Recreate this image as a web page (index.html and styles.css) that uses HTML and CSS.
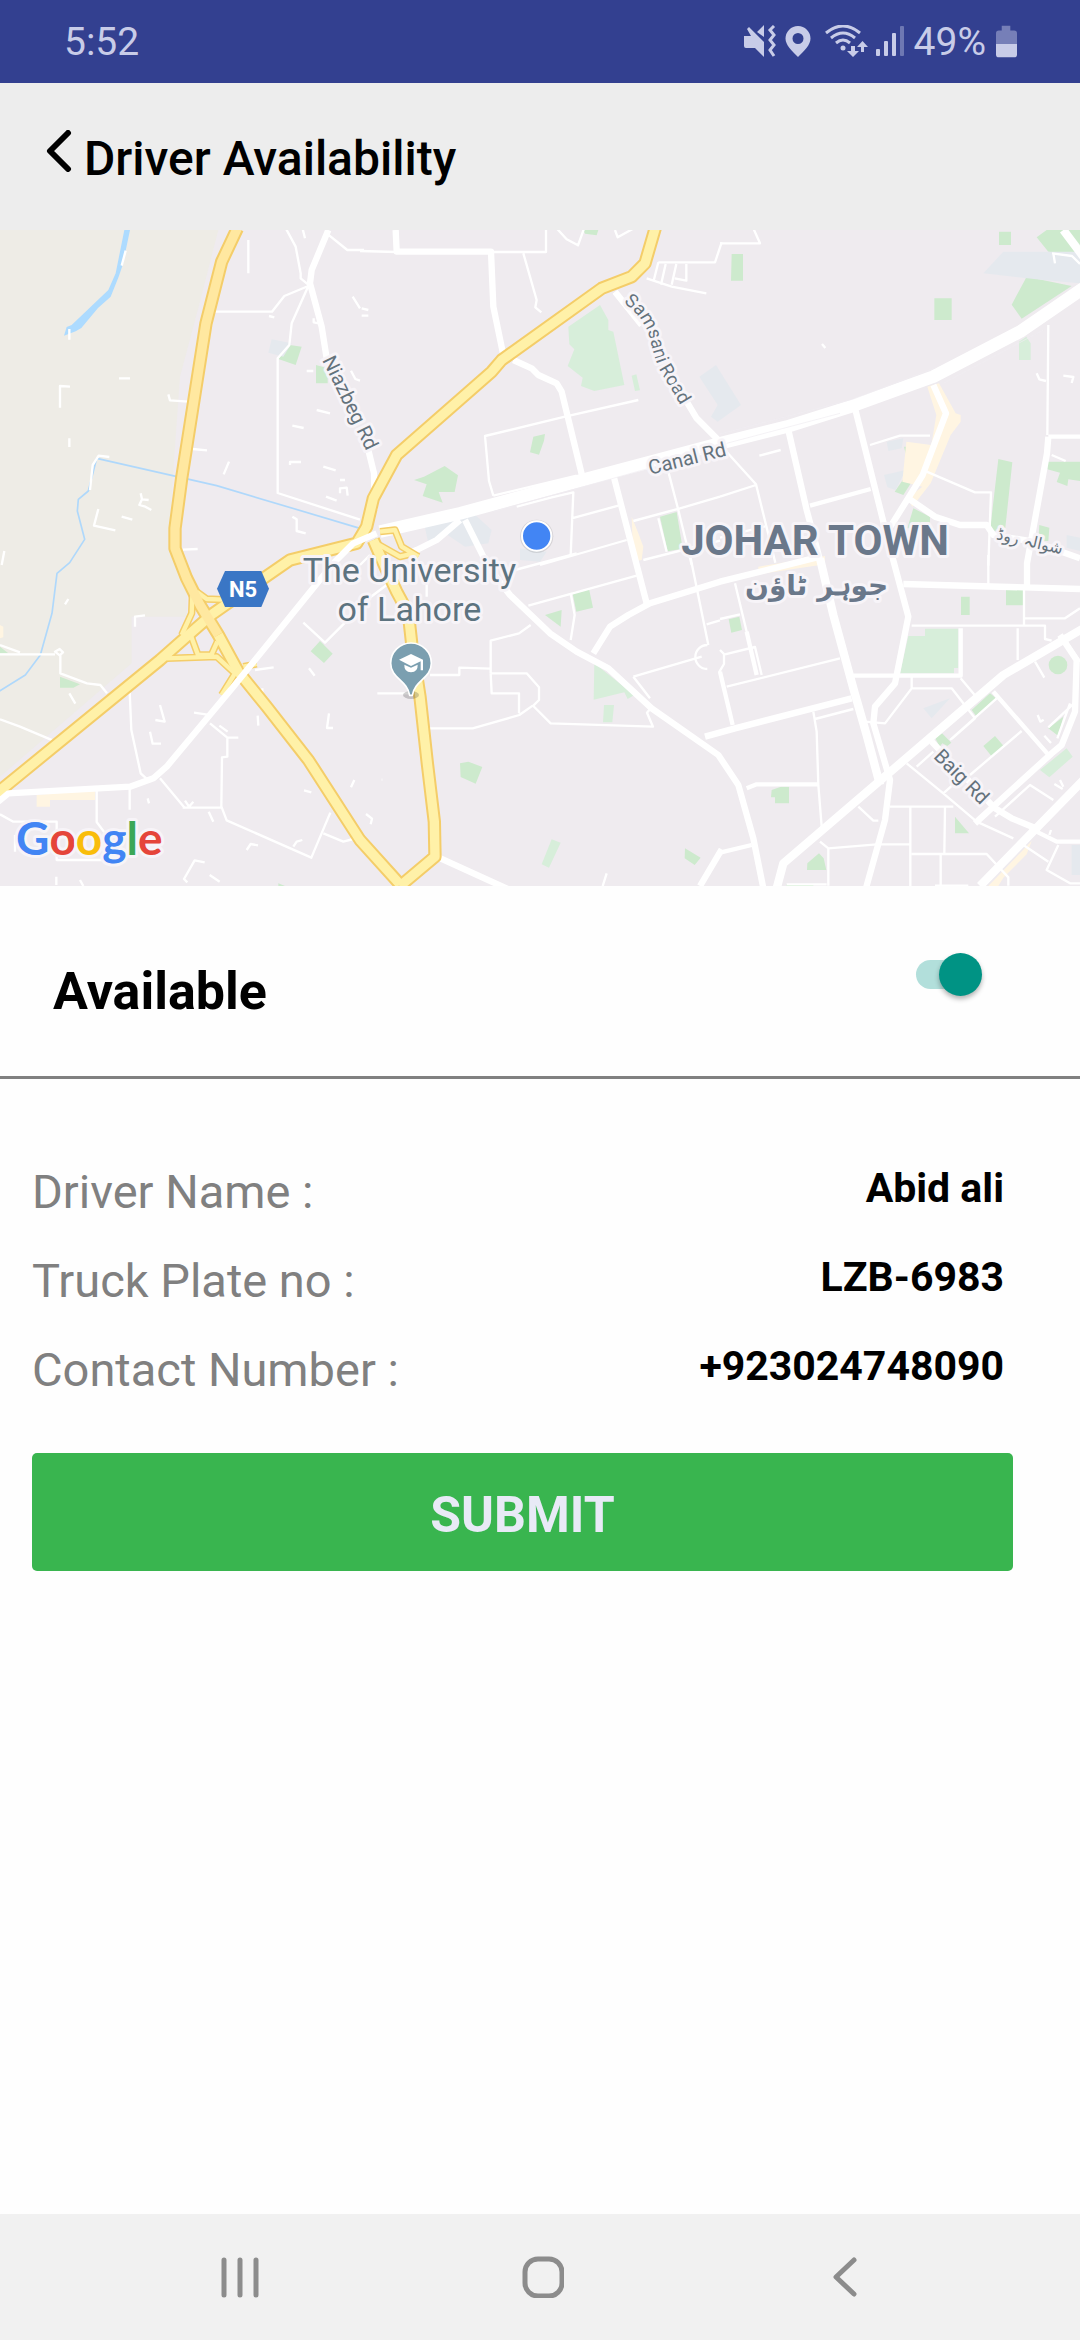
FILE: index.html
```html
<!DOCTYPE html>
<html lang="en">
<head>
<meta charset="utf-8">
<meta name="viewport" content="width=device-width, initial-scale=1">
<title>Driver Availability</title>
<link rel="stylesheet" href="styles.css">
</head>
<body>
<div class="status-bar">
  <span class="status-time">5:52</span>
  <div class="status-icons">
    <svg class="status-glyphs" viewBox="0 0 160 34" aria-hidden="true">
      <g fill="currentColor">
        <path d="M0 11h7L3 4l2-2 15 15v15l-9-9H2q-2 0-2-2zM13 7l7-7v12z"/>
        <path fill-rule="evenodd" d="M54 1a12.500 12.500 0 0 1 12.500 12.500C66.500 20 60 26 54 32 48 26 41.500 20 41.500 13.500A12.500 12.500 0 0 1 54 1zm0 7a5.500 5.500 0 1 0 0 11 5.500 5.500 0 0 0 0-11z"/>
        <circle cx="99" cy="23" r="2.500"/>
        <path d="M107 21h4v5h4l-6 6-6-6h4zM117 27h3v-5h4l-5.500-6-5.500 6h4z"/>
        <rect x="132" y="24" width="4" height="7" rx="1"/>
        <rect x="140" y="16" width="4" height="15" rx="1"/>
        <rect x="148" y="8" width="4" height="23" rx="1"/>
        <rect x="156" y="1" width="4" height="30" rx="1" opacity=".4"/>
      </g>
      <g fill="none" stroke="currentColor" stroke-width="3">
        <path d="M30 1l-4 4 4 5-4 5 4 5-4 5 4 6"/>
        <path d="M82 8q17-14 34 0M87 13q12-10 24 0M92 18q7-6 14 0"/>
      </g>
    </svg>
    <span>49%</span>
    <svg class="status-battery" viewBox="0 0 22 33" aria-hidden="true">
      <path fill="currentColor" opacity=".45" d="M6 0h9v5h4q3 0 3 3v11H0V8q0-3 3-3h3z"/>
      <path fill="currentColor" d="M0 19h22v11q0 3-3 3H3q-3 0-3-3z"/>
    </svg>
  </div>
</div>

<header class="app-header">
  <button class="back-button" type="button" aria-label="Back">
    <svg viewBox="0 0 26 42" aria-hidden="true"><path d="M22 3L4 21l18 18"/></svg>
  </button>
  <h1 class="title">Driver Availability</h1>
</header>

<main>
  <svg class="map" viewBox="0 0 3240 1968" role="img" aria-label="Map of Johar Town, Lahore">
    <rect class="land" width="3240" height="1968"/>
    <path class="rural" d="M0 0H655L600 215 540 440 520 720 505 950 560 1080V1160H395V1300L0 1640z"/>

    <g class="green">
      <path d="M870 345l35 5-18 55-52-18zM948 405l35 10v45h-35z"/>
      <path d="M0 1250l25 20H0zM180 1340l60 23-20 10h-40zM960 1233l38 38-26 28-40-35zM835 1968v-8l20 8z"/>
      <path d="M1750 0h45l-5 16-35-5zM1600 620l35-8-3 20-15 42-27-7zM1242 750l30-10 62-32 40 28-10 50h-48l12 32-60-20 12-35z"/>
      <path d="M1980 860l50-14 18 110-45 8z"/>
      <path d="M2195 72h34v80h-36zM2997 5h36v40h-36zM2803 205h52v65h-52zM3110 22l30-22h100v75l-95-10zM3080 140l135 28-150 98-30-42zM2712 650h36v28l-22 32zM2725 725l20 15-35 55-26-10zM2740 835l50 25v35h-68zM2995 687l42 10-22 205h-45zM3142 695h98v58l-35-5-3 20-32-12 10-28-38-10zM3118 885l30 8-3 40h-30z"/>
      <path d="M1717 1087l50-11 12 57-50 12zM1635 1155l50-15-3 50zM1380 1600l25-5 42 16-20 50-45-20zM2055 1855l47 28-18 22-30-20z"/>
      <path d="M2186 1168l32-8 8 40-32 8zM2883 1100h26v55h-26zM3018 1080h52v46h-52zM2915 1440l55-50 18 15-60 52zM2806 1525l20-15 28 28-12 10-15-8-8 10zM2950 1548l35-30 26 30-35 32zM3145 1495l45-35-15 58zM2315 1680l28-10h24v50h-42v-18h-12zM2865 1760l42 50h-42zM2422 1900l35-30 14 15 8 35h-58zM2360 1962h80v6h-80z"/>
      <circle cx="3174" cy="1305" r="28"/>
    </g>
    <g class="green-light">
      <path d="M1705 290l95-65 25 45v30l15 5 33 160-90 18-40-15 5-25-45-35 20-50-15-15zM1895 437l14-4 11 48-15 2zM3057 335l22-15 13 20v50h-35z"/>
      <path d="M1783 1300l120 95-20 12-10-20-92 22zM1812 1425h30l-5 52h-28zM1655 1828l27 10-35 75-22-10zM2725 1218h50v-22h100v118h-13v16H2700zM3120 1620l80-65 18 25-70 62z"/>
    </g>
    <g class="institution">
      <path d="M815 328l60 12-25 40-45-12zM2098 440l50-35 75 120-70 50-20-15 20-35zM1270 870l140-30 65 60-10 40-70 10-60-40-50 30zM2950 130l60-65 230 0v95l-110-10zM2660 635l50-10-5 30-40 8zM2652 735l65-15-30 60-25-8zM2770 1435l80-30-55 60zM3215 1845h25v90h-25zM1560 955l80 10-20 30-60-5zM3200 915l40 8v40l-40-10z"/>
    </g>
    <g class="commercial">
      <path d="M2782 470l35-10 50 90 15 5v20l-30 40-60 145-55 70-15-25 45-35-60-15 12-120 75 10 15-90zM1895 860l20 50 15 40-5 40-25 5zM2275 1010l200-32v25l-200 30zM2965 1968l130-135-15 40-70 70-15 25zM110 1695l175-15v30H150v20h-40zM210 1690h38v16h-38zM0 1185l10 5v32l-10 3z"/>
    </g>

    <path class="water" d="M373 0h17l-22 105-12 35-24 60-38 34-50 60-17 10-35 13 8-26 15-6 110-105 22-50z"/>
    <path class="stream" d="M290 685l360 82 430 128M290 685l-25 98-30 25-3 35 22 85-45 70-38 32-15 120-35 125-45 60-80 50M0 1695l290-18"/>

    <!-- side streets, drawn one map tile at a time -->
    <g class="street" transform="translate(0 -15)">
      <path d="M852 0l35 65 15 80v15l30 25M905 0l10 40M980 25l62 50h50M925 183l-72 30-37 47H645M925 183l-50 112-7 65-35 40v404l247 80M745 45v100M505 508l5 18 55 4M578 672l43 4M357 460h33M180 548v-65l30 2M208 640v26M270 795l8-75 18-28 32 4M422 805l4 18 20 2M426 823l-8 17 18 5 18 10M365 875l32 9M295 852l-13 50 64 14M807 273l16 4M877 602l34 7M920 438h20M950 555l40 10M970 725l37 11M870 720v-9h33M687 710l-16 38M548 974l45-2M877 875l13 8v35l27 7M978 815l32 12M1020 765h15M1020 805v-15l20-2 3 24M1058 215l22 35M1053 437l13 25 14 5M5 1020l8-42M365 122l12-45M208 312v32M941 280v12l16 3"/>
    </g>
    <g class="street" transform="translate(1080 -15)">
      <path d="M0 78l110 3M400 81h158V0M490 85l40 140-4 22 18 15M590 10l30 33 34 18 18-50M765 15l8 22 45-25M400 812l-13-44-12-135 240-58 220-50M400 812l250-60M470 845l105-28 65-15-8 188M635 880l140-38M540 1020l260-75M860 160l75 25 104 20M895 112h170l20-60M895 112l-14 55M917 117l-14 62M949 117l-14 62M979 117v50l-35-7M820 888l140-38 120-35M925 740l30 115 40 165M895 880l25 100M850 1005l230-58M5 250l20 5M5 272h20M0 1020l30-30"/>
    </g>
    <g class="street" transform="translate(2160 -15)">
      <path d="M0 55h120l-20-45M10 670l98 108 58 235M0 815l108-35M0 938l135-34M118 692l64-17M450 660l90-28h90M620 740l145 62h48l-8 220M985 300l-3 330M950 445l8 18 20 5M1030 452l30 4-5 18M996 85l60 8 24 24M1000 85l5 30M306 357l10 12M995 690l42 18"/>
      <path class="mid" d="M985 635h95M270 842l182-50"/>
    </g>
    <g class="street" transform="translate(0 975)">
      <path d="M0 270l60 22M0 298h165M165 290l14-8 10 10-10 9zM181 300v55l80 30 40 5 20 25M0 493l60 22 100 42M389 410l5 115 28 130 20 18M405 215v-30l30-4M195 148l10-16M208 415l18 31M480 450l14 50-28-5M450 530l8 36h25M582 473l40 6M630 505l52 43v57l-16 2-2 147 16 42 254 112 57-135M548 758h115M682 548h33M658 512l25 18M765 345l56-8M787 400v22M773 482l2 30M910 203l65 60 60-60M927 340l17 22M987 475l-6 44h18M480 670l75 90M555 737l12 18 13-15M626 770l14 30M740 885l12-18 22 4M880 875l10-15 17-5M970 835l60 25 30-8M1063 675l-10 22M912 706l22 6M290 705v96l30 40M389 700v64M443 730l4 15M0 778l40 22h130v115h200l20-18M45 890v-50M240 975l10 18M169 965v25M614 922l-30-6-32 56 10 10M629 960l30 20"/>
    </g>
    <g class="street" transform="translate(1080 975)">
      <path d="M200 125V30M0 150l80-60M210 360h88v-22l92 3M205 520h133l140-40 40-28M392 355V257l85-22 35-25M392 355h108l37 42v38l-20 20M392 355l3 60h82v60M517 450l55 55 307 10-18-42 10-12M505 152l325-90M465 45l185-50M632 115l12 65-12 75M52 415h100M820 365l205-60M820 365l50 65M740 955l-12 38M18 777l18 14-4 17M65 674h2M990 0l55 270M1040 208l40-12M1042 270a36 36 0 0 0 0 72"/>
    </g>
    <g class="street" transform="translate(2160 975)">
      <path d="M0 192l60-14M45 85l65 270M15 298l90-22 20 84M20 395l340-85M280 470l10 60 5 160 10 125M285 492l115-30M575 365v35h120l70 90-70 62M575 400l-80 105-60-5M805 0v88M912 100v115M915 190h120l45-30M575 212h400v40l20 5M893 220v95M945 320l28 48M722 370l42 50M560 625l110 90 100 85 110 50M590 635l50-45M670 715l50-45M750 660l155-132M690 555l140-125M770 800l160-140M825 785l105-95 70 45M510 755h190M571 755v238M675 755l-2 140M300 860l25 20v112M325 880l145-12h100M575 897h225l65 70v25M662 897v95M645 992h100M910 870l75 50M1015 870l-35 75 70 40h30M415 755l45 42h15M200 988h120M985 517l80-75M1012 550l38-105M953 480l8 20 10-6M973 542l20 22M1003 687l25 15M1020 675l10 20M993 825l-5 15M1040 260l40 60"/>
      <path d="M0 285l12 12v30l-15 25"/>
      <path class="mid" d="M80 700l30-12h185M400 362h322V220M820 410l170 195M0 893l95-23M0 350l38 160M80 230l30 130M930 820l80 40h75"/>
    </g>

    <g class="road">
      <path d="M985 0l-50 120-5 40 35 130 15 95M1100 640l22 90 2 110M1187 0l3 65h283l7 165 32 155M1540 390l55 25 20 20 55 25 15 25 62 255M1845 185l80 100M2060 515l30 50 70 70M1395 870l70 140M1380 870l-70 60-60 30-50 20M1840 735l100 385M2565 535l100 400 60 225-40 200-60 70-5 50 50 170-15 120-60 215"/>
      <path d="M2365 600l55 240 40 150M2800 465l38 85-70 185-100 160M2725 805l80 55 75 25h80l20 30 120 20 140 50M3145 620l-4 50-60 330v75M2710 1062l530 15M3180 1215l50 75-5 155-40 100-30 25-230 210"/>
      <path d="M1465 1010l65 85 120 115 80 55 95 50 130 120 200 140 60 90 45 160 30 150M1780 1270l50-80 55-35 65-35 210-65 300-75M2115 1520l90-25 350-90M1310 1880l220 100M2100 1968l65-110"/>
      <path d="M2795 1535l190 200 50 30 85 35"/>
    </g>
    <path class="road-wide" d="M1140 905l240-55 360-98 420-112 200-50 200-63 240-87 260-135 190-130"/>
    <path class="road-seam" d="M1480 845l260-72 420-118M2160 612l400-105 250-95M2830 460l300-160M2180 640l340-90"/>
    <path class="arterial" d="M2460 985l40 170 60 220 40 140 40 150M3250 1195l-240 140-210 180-450 385-20 75M3250 1650l-310 318"/>
    <path class="arterial" d="M3190 0l60 80"/>

    <path class="link-case" d="M578 1070l-3 80-30 65M590 1085l30 22 50 2M572 1215l22 60h40l18-40M500 1285l150-5 60 55M730 1310l40-8M705 1330l-40 65M1120 935l80 45 40-10M1140 905l45-5 20 50 50 30"/>
    <path class="trunk-case" d="M1120 930l35 80 35 75 35 65 10 90 25 160 22 200 21 175 2 105-105 88M-10 1690l490-400 85-75 75-65 100-70 130-90 200-50 30-50 20-85 70-130 285-250 30-35 300-215 90-35 40-40 32-110M712-5L665 95l-47 185-73 465-20 150v60l35 90 40 80 55 90 60 110 85 105 125 160 155 240 120 133"/>
    <path class="link" d="M578 1070l-3 80-30 65M590 1085l30 22 50 2M572 1215l22 60h40l18-40M500 1285l150-5 60 55M730 1310l40-8M705 1330l-40 65M1120 935l80 45 40-10M1140 905l45-5 20 50 50 30"/>
    <path class="trunk" d="M1120 930l35 80 35 75 35 65 10 90 25 160 22 200 21 175 2 105-105 88M-10 1690l490-400 85-75 75-65 100-70 130-90 200-50 30-50 20-85 70-130 285-250 30-35 300-215 90-35 40-40 32-110M655 1215l60 110 85 105 125 160 155 240 120 133"/>
    <path class="trunk trunk-gold" d="M712-5L665 95l-47 185-73 465-20 150v60l35 90 40 80 55 90"/>
    <path class="road" d="M1130 910l-70 30-60 60-300 370-200 240-40 35-70 25-365 20-30 25"/>

    <g class="route-badge">
      <path d="M675 1023h109l23 53-23 55H675l-24-55z"/>
      <text x="729" y="1100">N5</text>
    </g>

    <g class="place">
      <text x="1228" y="1055">The University</text>
      <text x="1228" y="1173">of Lahore</text>
    </g>
    <g class="district">
      <text x="2445" y="975">JOHAR TOWN</text>
      <text class="district-urdu" x="2450" y="1094" lang="ur" direction="rtl">جوہر ٹاؤن</text>
    </g>
    <defs>
      <path id="samsani" d="M1870 218Q1935 262 1952 335 1966 395 1982 425L2065 565"/>
    </defs>
    <g class="road-name">
      <text transform="translate(966 390) rotate(64)">Niazbeg Rd</text>
      <text class="road-curved"><textPath href="#samsani">Samsani Road</textPath></text>
      <text transform="translate(1951 734) rotate(-14)">Canal Rd</text>
      <text transform="translate(2798 1582) rotate(45)">Baig Rd</text>
      <text class="road-urdu" transform="translate(3086 950) rotate(13)" lang="ur" direction="rtl">شوالہ روڈ</text>
    </g>

    <ellipse cx="1233" cy="1395" rx="24" ry="12" fill="#000" opacity=".18"/>
    <path fill="#7b9fb0" stroke="#fff" stroke-width="5" d="M1233 1239a61 61 0 0 1 61 61c0 45-50 50-57 96h-8c-7-46-57-51-57-96a61 61 0 0 1 61-61z"/>
    <path fill="#fff" d="M1197 1289l36-17 36 17v32h-7v-27l-29 14zM1213 1304l20 9 20-9q1 22-20 23-21-1-20-23z"/>
    <circle cx="1610" cy="919" r="50" fill="#000" opacity=".1"/>
    <circle cx="1610" cy="918" r="44" fill="#4285f4" stroke="#fff" stroke-width="6"/>

    <text class="map-brand" x="48" y="1875"><tspan fill="#4285f4">G</tspan><tspan fill="#e5453a">o</tspan><tspan fill="#f9bd0b">o</tspan><tspan fill="#4285f4">g</tspan><tspan fill="#3ba757">l</tspan><tspan fill="#e5453a">e</tspan></text>
  </svg>

  <div class="availability">
    <label class="availability-label" for="available">Available</label>
    <input class="switch" id="available" type="checkbox" role="switch" checked>
  </div>

  <form class="details">
    <dl class="fields">
      <div class="field"><dt>Driver Name :</dt><dd>Abid ali</dd></div>
      <div class="field"><dt>Truck Plate no :</dt><dd>LZB-6983</dd></div>
      <div class="field"><dt>Contact Number :</dt><dd>+923024748090</dd></div>
    </dl>
    <button class="submit" type="button">SUBMIT</button>
  </form>
</main>

<nav class="system-nav" aria-label="System">
  <button type="button" aria-label="Recent apps"><svg viewBox="0 0 42 42"><path d="M5 4v35M21 4v35M37 4v35"/></svg></button>
  <button type="button" aria-label="Home"><svg viewBox="0 0 42 42"><rect x="3" y="3" width="37" height="37" rx="13"/></svg></button>
  <button type="button" aria-label="Back"><svg viewBox="0 0 42 42"><path d="M30 4L12 21l18 17"/></svg></button>
</nav>
</body>
</html>
```

FILE: styles.css
```css
* {
  box-sizing: border-box;
}

body {
  margin: 0;
  min-height: 100vh;
  display: flex;
  flex-direction: column;
  background: #fefefe;
  color: #000;
  font-family: Roboto, "Noto Sans", sans-serif;
}

button {
  border: 0;
  background: none;
  padding: 0;
  font: inherit;
  color: inherit;
}

svg {
  display: block;
}

/* Status bar */
.status-bar {
  display: flex;
  justify-content: space-between;
  align-items: center;
  height: 83px;
  padding: 0 63px 0 64px;
  background: #334090;
  color: #c8cce8;
  font-size: 39px;
  line-height: 46px;
}

.status-icons {
  display: flex;
  align-items: center;
  gap: 10px;
}

.status-glyphs {
  width: 160px;
  height: 34px;
}

.status-battery {
  width: 21px;
  height: 33px;
}

/* App header */
.app-header {
  display: flex;
  align-items: flex-start;
  gap: 12px;
  height: 147px;
  padding: 47px 46px;
  background: #ededed;
}

.back-button svg {
  width: 26px;
  height: 42px;
  fill: none;
  stroke: #000;
  stroke-width: 6;
  stroke-linecap: round;
  stroke-linejoin: round;
}

.title {
  margin: 0;
  font-size: 48px;
  line-height: 58px;
  font-weight: 500;
}

/* Map */
.map {
  width: 100%;
  height: auto;
  overflow: hidden;
  stroke-linejoin: round;
}

.land { fill: #efebef; }
.rural { fill: #eeece6; }
.green { fill: #cdeacd; }
.green-light { fill: #d7eeda; }
.institution { fill: #e5e9ee; }
.commercial { fill: #fff5e2; }
.water { fill: #addbff; }

.stream,
.street,
.road,
.road-wide,
.road-seam,
.arterial,
.link-case,
.link,
.trunk-case,
.trunk {
  fill: none;
  stroke: #fff;
}

.stream {
  stroke: #afd8fb;
  stroke-width: 5;
}

.street {
  stroke-width: 7;
}

.street .mid {
  stroke-width: 13;
}

.road {
  stroke-width: 19;
}

.road-wide {
  stroke-width: 38;
}

.road-seam {
  stroke: #f0edf1;
  stroke-width: 2;
}

.arterial {
  stroke-width: 25;
}

.link-case {
  stroke: #f4cd69;
  stroke-width: 22;
}

.link {
  stroke: #fff1a8;
  stroke-width: 13;
}

.trunk-case {
  stroke: #f4cd69;
  stroke-width: 40;
}

.trunk {
  stroke: #fff1a8;
  stroke-width: 28;
}

.trunk-gold {
  stroke: #ffe8a0;
}

.map text {
  paint-order: stroke;
  stroke: #f7f4f8;
  stroke-width: 18;
  stroke-linejoin: round;
}

.route-badge {
  fill: #3a76c5;
}

.map .route-badge text {
  fill: #fff;
  stroke: none;
  font-size: 66px;
  font-weight: 700;
  text-anchor: middle;
}

.place {
  fill: #5d737f;
  font-size: 102px;
  text-anchor: middle;
}

.district {
  fill: #6a788a;
  font-size: 126px;
  font-weight: 700;
  text-anchor: middle;
}

.map .district-urdu {
  font-family: "DejaVu Sans", sans-serif;
  font-size: 84px;
}

.road-name {
  fill: #64727c;
  font-size: 60px;
}

.road-curved {
  font-size: 56px;
}

.map .road-urdu {
  font-family: "DejaVu Sans", sans-serif;
  font-size: 48px;
  text-anchor: middle;
}

.map-brand {
  font-family: Lato, sans-serif;
  font-size: 138px;
  font-weight: 700;
}

/* Availability */
.availability {
  display: flex;
  justify-content: space-between;
  align-items: flex-start;
  height: 193px;
  padding: 67px 98px 0 53px;
  border-bottom: 3px solid #808080;
}

.availability-label {
  padding-top: 8px;
  font-size: 52px;
  line-height: 62px;
  font-weight: 700;
}

.switch {
  appearance: none;
  position: relative;
  width: 66px;
  height: 43px;
  margin: 0;
}

.switch::before {
  content: "";
  position: absolute;
  inset: 7px 4px 7px 0;
  border-radius: 15px;
  background: #b2dfdb;
}

.switch::after {
  content: "";
  position: absolute;
  top: 0;
  right: 0;
  width: 43px;
  height: 43px;
  border-radius: 50%;
  background: #009384;
  box-shadow: 0 3px 5px rgba(0, 0, 0, .3);
}

/* Details */
.details {
  padding: 80px 67px 0 32px;
}

.fields {
  margin: 0;
}

.field {
  display: flex;
  justify-content: space-between;
  height: 89px;
  padding-right: 9px;
}

.field dt {
  color: #808080;
  font-size: 47px;
  line-height: 66px;
}

.field dd {
  margin: 0;
  font-size: 41px;
  line-height: 58px;
  font-weight: 700;
}

.submit {
  display: block;
  width: 100%;
  height: 118px;
  margin-top: 27px;
  padding-top: 5px;
  border-radius: 5px;
  background: #39b54f;
  color: #e8eaf6;
  font-size: 50px;
  font-weight: 700;
}

/* System navigation */
.system-nav {
  display: flex;
  justify-content: space-between;
  align-items: center;
  height: 126px;
  margin-top: auto;
  padding: 0 214px 0 219px;
  background: #f1f1f1;
}

.system-nav svg {
  width: 42px;
  height: 42px;
  fill: none;
  stroke: #8c8c8c;
  stroke-width: 5;
  stroke-linecap: round;
  stroke-linejoin: round;
}
```
